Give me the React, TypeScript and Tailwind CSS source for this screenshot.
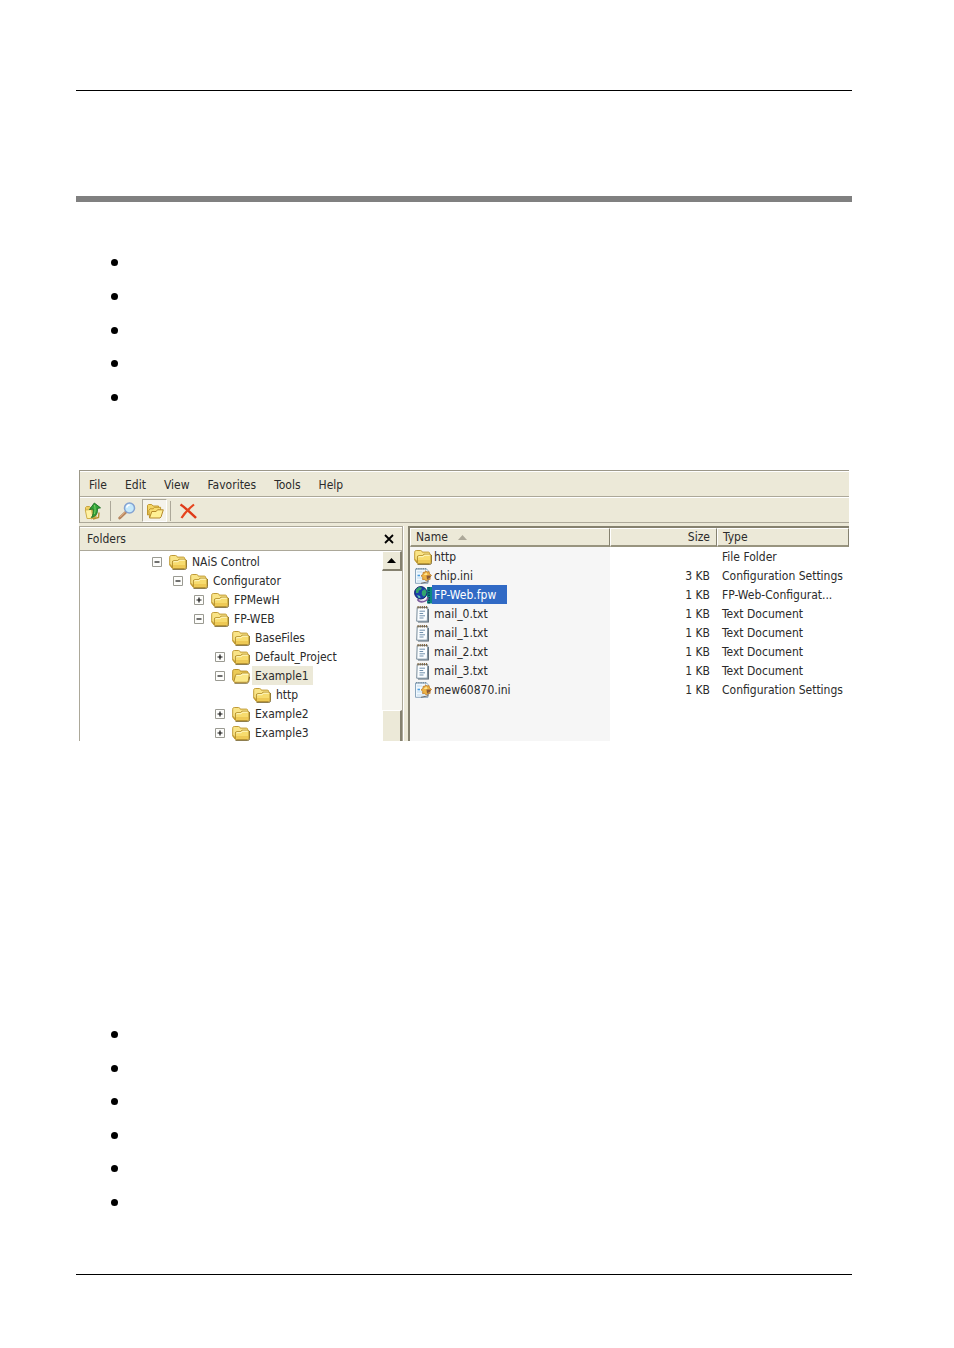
import React from "react";

type TreeNode = {
    name: string;
    indent: string;
    state: "open" | "closed" | "leaf";
    selected?: boolean;
};

type FileRow = {
    name: string;
    icon: "folder" | "ini" | "web" | "text";
    size: string;
    type: string;
    selected?: boolean;
};

const menus = ["File", "Edit", "View", "Favorites", "Tools", "Help"];

const tree: TreeNode[] = [
    { name: "NAiS Control", indent: "pl-[72px]", state: "open" },
    { name: "Configurator", indent: "pl-[93px]", state: "open" },
    { name: "FPMewH", indent: "pl-[114px]", state: "closed" },
    { name: "FP-WEB", indent: "pl-[114px]", state: "open" },
    { name: "BaseFiles", indent: "pl-[135px]", state: "leaf" },
    { name: "Default_Project", indent: "pl-[135px]", state: "closed" },
    { name: "Example1", indent: "pl-[135px]", state: "open", selected: true },
    { name: "http", indent: "pl-[156px]", state: "leaf" },
    { name: "Example2", indent: "pl-[135px]", state: "closed" },
    { name: "Example3", indent: "pl-[135px]", state: "closed" },
];

const files: FileRow[] = [
    { name: "http", icon: "folder", size: "", type: "File Folder" },
    { name: "chip.ini", icon: "ini", size: "3 KB", type: "Configuration Settings" },
    { name: "FP-Web.fpw", icon: "web", size: "1 KB", type: "FP-Web-Configurat...", selected: true },
    { name: "mail_0.txt", icon: "text", size: "1 KB", type: "Text Document" },
    { name: "mail_1.txt", icon: "text", size: "1 KB", type: "Text Document" },
    { name: "mail_2.txt", icon: "text", size: "1 KB", type: "Text Document" },
    { name: "mail_3.txt", icon: "text", size: "1 KB", type: "Text Document" },
    { name: "mew60870.ini", icon: "ini", size: "1 KB", type: "Configuration Settings" },
];

const FolderIcon: React.FC = () => (
    <svg className="h-[18px] w-[18px] shrink-0" viewBox="0 0 18 18" aria-hidden="true">
        <path d="M3.5 16.3h12.3c1.2 0 1.8-.7 1.8-1.8V7" fill="none" stroke="#6e5d28" />
        <path d="M.7 12V4.2c0-1.1.6-1.7 1.6-1.7h4.2c1 0 1.3.5 1.7 1.6h6c1 0 1.5.5 1.5 1.4V12l-12 3.5z" fill="#f9e487" stroke="#c09a35" />
        <path d="M1.2 11.5 3.4 15" stroke="#c39b31" strokeWidth="1.4" />
        <path d="M3.4 8.9c0-.8.4-1.2 1.2-1.2h4l1.3-1.5h5.8c.9 0 1.3.5 1.3 1.3v6.7c0 .9-.5 1.4-1.3 1.4H4.6c-.8 0-1.2-.5-1.2-1.4z" fill="#f7dc6e" stroke="#b38e2b" />
        <path d="M4.4 9.3c0-.4.2-.6.5-.6h4.3l1.2-1.5h5.3" fill="none" stroke="#fff9c8" />
        <path d="M4 12h12.5v2.9H4z" fill="#e7bd45" opacity=".6" />
    </svg>
);

const OpenFolderIcon: React.FC = () => (
    <svg className="h-[18px] w-[18px] shrink-0" viewBox="0 0 18 18" aria-hidden="true">
        <path d="M2.5 16.2h12.3c1 0 1.5-.6 1.9-1.7l1-5" fill="none" stroke="#6e5d28" />
        <path d="M.7 13V4.2c0-1.1.6-1.7 1.6-1.7h4.2c1 0 1.3.5 1.7 1.6h6.2c1 0 1.5.5 1.5 1.4V12l-13 3.3z" fill="#eccb57" stroke="#b8902a" />
        <path d="M3.4 8.5c.2-.8.5-1.2 1.3-1.2h4l1.2-1.2h6.3c.9 0 1.2.5 1.1 1.3l-1 6.5c-.2.9-.5 1.4-1.4 1.4H2.8c-.8 0-1-.5-.8-1.3z" fill="#fbe889" stroke="#b08a2b" />
        <path d="m4.6 8.4 4.6-.1 1.2-1.1h5.7" fill="none" stroke="#fffbd0" />
    </svg>
);

const IniIcon: React.FC = () => (
    <svg className="h-[18px] w-[18px] shrink-0" viewBox="0 0 18 18" aria-hidden="true">
        <path d="M1.5 2h11l1.5 1.5V16.3H1.5z" fill="#f0f8fe" stroke="#8ba6bd" />
        <path d="M2 1.8h11" stroke="#556f83" strokeDasharray="1.4 .8" />
        <path d="M3 5h5M3 11h5M3 14h8" stroke="#c1d9eb" />
        <path d="M3.5 8.5h2.5" stroke="#4b9de0" strokeWidth="1.6" />
        <path d="m7 16.3 7-1.5V12" fill="none" stroke="#6d6d6d" />
        <path d="m11.5 3.8 1.6 1.3 2-.5.4 2.2 2 1.6-1.6 1.8.3 2.1-2.3.2-1.6 1.6-1.6-1.7-2.2.1.3-2.1L7 8.7l2-1.3.1-2.1 1.9.1z" fill="#eeb344" stroke="#b9792a" strokeWidth=".8" />
        <path d="m9.5 8 3-2.5 1 2.5z" fill="#ffe490" />
        <path d="M12.5 8.5h4v2l-3.5 2z" fill="#8a5a39" />
    </svg>
);

const WebIcon: React.FC = () => (
    <svg className="h-[18px] w-[18px] shrink-0" viewBox="0 0 18 18" aria-hidden="true">
        <path d="M13 1h5v16.5h-5z" fill="#0b8a7f" />
        <path d="M15 1v16.5" stroke="#04324c" strokeWidth="1.4" strokeDasharray="1.5 1" />
        <path d="M3.5 13.2c2 3.6 6.500 3 9.500.6l1-2.6" fill="none" stroke="#7b5a9c" strokeWidth="1.8" />
        <path d="M5 13.500c2 1.800 5 1.500 7.500-.5" fill="none" stroke="#e4dcee" />
        <circle cx="6.800" cy="6.800" r="6.200" fill="#1a3fa8" stroke="#10246d" />
        <path d="M2 3.500 5 1l3 .8-1 2-2 .7-.7 2.500L2 7zM8 5l3-2 1.700 3-1.500 4-2 .4-1.500-2.500z" fill="#33a56d" />
        <path d="m3 9 3 1 .5 2-2-.2z" fill="#65c5b1" />
    </svg>
);

const TextIcon: React.FC = () => (
    <svg className="h-[18px] w-[18px] shrink-0" viewBox="0 0 18 18" aria-hidden="true">
        <path d="M4 16.900h10.300V4" fill="none" stroke="#55636f" strokeWidth="1.200" />
        <path d="M3.200 2.500h10.600L13.300 16.200H2.700z" fill="#fafdff" stroke="#788c9b" />
        <path d="M3.500 2.200h10.500" stroke="#806743" strokeWidth="2.400" strokeDasharray="1.200 .9" />
        <path d="M5.500 6.200H11M5.500 8.500h3.700M5.500 10.800H11M5.500 13h4" stroke="#708fab" />
    </svg>
);

const FileIcon: React.FC<{ icon: FileRow["icon"] }> = ({ icon }) => {
    if (icon === "folder") return <FolderIcon />;
    if (icon === "ini") return <IniIcon />;
    if (icon === "web") return <WebIcon />;
    return <TextIcon />;
};

// Small plus / minus box in front of a folder
const Expander: React.FC<{ state: TreeNode["state"] }> = ({ state }) => (
    <svg className="h-[10px] w-[10px] shrink-0" viewBox="0 0 10 10" aria-hidden="true">
        <path d="M.5.5h9v9h-9z" fill="#fdfdfb" stroke="#9a9a92" />
        <path d={state === "closed" ? "M2.500 5h5M5 2.500v5" : "M2.500 5h5"} stroke="#111" strokeWidth="1.200" />
    </svg>
);

const BulletList: React.FC<{ count: number; className: string }> = ({ count, className }) => (
    <ul className={`flex flex-col justify-between pl-[35px] ${className}`}>
        {Array.from({ length: count }, (_, ind) => (
            <li key={ind} className="h-[7px] w-[7px] rounded-full bg-black" />
        ))}
    </ul>
);

const Toolbar: React.FC = () => (
    <div className="flex h-[26px] items-center border-t border-b border-t-white border-b-[#aca899] pt-[1px] pl-[2px]">
        <button aria-label="Up" className="flex h-[22px] w-[22px] items-center justify-center">
            <svg className="h-[18px] w-[18px]" viewBox="0 0 18 18">
                <path d="M1.500 8V5.500l1-1h3L7 6h5v9l-5 2z" fill="#f0d062" stroke="#c8a540" />
                <path d="m1.300 8 6.200-.5 1.500 9L3 16.500z" fill="#fff2a4" stroke="#cfae4a" />
                <path d="m9 17 5.500-1.500.5-5" fill="none" stroke="#b8912e" strokeWidth="1.400" />
                <path d="M7.300 15.500c2-2 2.200-5.500 1.600-8.500l-3.400.500L10.300 1l6.200 4.800-3.200.7c.8 4.500-1.300 8.200-6 9z" fill="#32a33a" stroke="#176c20" strokeWidth=".9" />
                <path d="M10.500 3c.8 3 .8 6.500-.2 9" fill="none" stroke="#7ed566" />
            </svg>
        </button>
        <span className="ml-[6px] h-[20px] w-px bg-[#aca899]" />
        <button aria-label="Search" className="ml-[5px] flex h-[22px] w-[22px] items-center justify-center">
            <svg className="h-[18px] w-[18px]" viewBox="0 0 18 18">
                <path d="m8 10-6.300 6" stroke="#b5835c" strokeWidth="2.800" strokeLinecap="round" />
                <path d="m7 10.200-5 5" stroke="#e2b48a" />
                <circle cx="11.500" cy="6" r="5" fill="#c5e9fb" stroke="#84a3d2" strokeWidth="1.500" />
                <path d="M8.700 5.700c.2-1.700 1.300-2.600 3-2.700" fill="none" stroke="white" strokeWidth="1.500" />
            </svg>
        </button>
        <button
            aria-label="Folders"
            className="ml-[4px] flex h-[23px] w-[25px] items-center justify-center border border-[#aca899] border-r-white border-b-white bg-[#f5f3eb]"
        >
            <svg className="h-[18px] w-[18px]" viewBox="0 0 18 18">
                <path d="M1.500 13V3.300l1-.8h3.200l1.300 1.500h5.500V9z" fill="#f4d566" stroke="#c2992f" />
                <path d="M3.500 15.500 2.800 8.500 4 6.800h3.200l1.200-1.500h6.200V8z" fill="#f8dc6f" stroke="#c2992f" />
                <path d="M3.500 16 5.800 9.500h4.300l1.400-1.700h5.800l-2.200 7-1.100 1.200z" fill="#fff094" stroke="#b5892a" />
            </svg>
        </button>
        <span className="ml-[3px] h-[20px] w-px bg-[#aca899]" />
        <button aria-label="Delete" className="ml-[6px] flex h-[22px] w-[22px] items-center justify-center">
            <svg className="h-[18px] w-[18px]" viewBox="0 0 18 18">
                <path d="M1.500 2.500c5 3.300 10 8.200 15.500 13.500" fill="none" stroke="#df3a19" strokeWidth="2.400" />
                <path d="M15 2.500C9.500 7 5.500 11 2.500 16" fill="none" stroke="#e6451f" strokeWidth="2.200" />
            </svg>
        </button>
    </div>
);

const FolderTree: React.FC = () => (
    <div className="flex w-[324px] shrink-0 flex-col border-t border-r border-l border-[#aca899]">
        <div className="flex h-[24px] items-center justify-between border-t border-b border-t-white border-b-[#aca899] pr-[7px] pl-[7px]">
            <span>Folders</span>
            <button aria-label="Close" className="flex h-[12px] w-[12px] items-center justify-center">
                <svg className="h-[10px] w-[10px]" viewBox="0 0 10 10">
                    <path d="m1 1 8 8M9 1 1 9" stroke="black" strokeWidth="1.800" />
                </svg>
            </button>
        </div>
        <div className="flex h-[190px] bg-white">
            <ul className="grow overflow-hidden pt-[1px]">
                {tree.map((node, ind) => (
                    <li key={ind} className={`flex h-[19px] items-center ${node.indent}`}>
                        {node.state !== "leaf" && (
                            <button aria-label={`Toggle ${node.name}`} className="mr-[7px]">
                                <Expander state={node.state} />
                            </button>
                        )}
                        {node.state === "leaf" && <span className="w-[17px] shrink-0" />}
                        {node.selected ? <OpenFolderIcon /> : <FolderIcon />}
                        <span
                            className={`ml-[2px] h-[19px] pr-[4px] pl-[3px] leading-[20px] whitespace-nowrap ${
                                node.selected ? "bg-[#ece9d8]" : ""
                            }`}
                        >
                            {node.name}
                        </span>
                    </li>
                ))}
            </ul>
            {/* Scroll bar */}
            <div className="flex w-[20px] shrink-0 flex-col justify-between bg-[#f5f4ee]">
                <button
                    aria-label="Scroll up"
                    className="flex h-[20px] items-center justify-center border-t border-r-2 border-b-2 border-l border-t-white border-r-[#85816f] border-b-[#85816f] border-l-white bg-[#ece9d8]"
                >
                    <svg className="h-[5px] w-[9px]" viewBox="0 0 9 5">
                        <path d="M0 5 4.500 0 9 5z" />
                    </svg>
                </button>
                <div className="h-[31px] border-t border-r-2 border-l border-t-white border-r-[#85816f] border-l-white bg-[#ece9d8]" />
            </div>
        </div>
    </div>
);

const headCell =
    "h-[19px] border-t border-l border-r border-b-2 border-t-white border-l-white border-r-[#85816f] border-b-[#98947f] bg-[#ece9d8] p-0 font-normal";

const FileTable: React.FC = () => (
    <div className="min-w-0 grow border-t-2 border-l-2 border-[#85816f] bg-white">
        <table className="w-full table-fixed border-separate border-spacing-0">
            <colgroup>
                <col className="w-[200px]" />
                <col className="w-[107px]" />
                <col />
            </colgroup>
            <thead>
                <tr>
                    <th className={`${headCell} pl-[5px] text-left`}>
                        <span className="flex h-[16px] items-center gap-[10px]">
                            Name
                            <svg className="h-[5px] w-[9px]" viewBox="0 0 9 5" aria-hidden="true">
                                <path d="M0 5 4.500 0 9 5z" fill="#aca899" />
                            </svg>
                        </span>
                    </th>
                    <th className={`${headCell} pr-[6px] text-right`}>Size</th>
                    <th className={`${headCell} pl-[5px] text-left`}>Type</th>
                </tr>
            </thead>
            <tbody>
                {files.map((file) => (
                    <tr key={file.name}>
                        <td className="h-[19px] bg-[#f6f6f6] p-0">
                            <div className="flex h-[19px] items-center pl-[4px]">
                                <FileIcon icon={file.icon} />
                                <span
                                    className={`h-[19px] pl-[2px] leading-[20px] ${
                                        file.selected ? "bg-[#316ac5] pr-[11px] text-white" : ""
                                    }`}
                                >
                                    {file.name}
                                </span>
                            </div>
                        </td>
                        <td className="h-[19px] p-0 pr-[7px] text-right">{file.size}</td>
                        <td className="h-[19px] p-0 pl-[5px] whitespace-nowrap">{file.type}</td>
                    </tr>
                ))}
                {/* Empty space under the last file */}
                <tr aria-hidden="true">
                    <td className="h-[42px] bg-[#f6f6f6] p-0" />
                    <td />
                    <td />
                </tr>
            </tbody>
        </table>
    </div>
);

const App: React.FC = () => {
    return (
        <main className="min-h-screen bg-white pt-[90px] pr-[102px] pb-[73px] pl-[76px]">
            <hr className="border-t border-black" />
            <div className="mt-[105px] h-[6px] bg-[#808080]" />
            <BulletList count={5} className="mt-[57px] h-[142px]" />

            {/* Explorer window */}
            <section className="mx-[3px] mt-[69px] bg-[#ece9d8] font-['DejaVu_Sans_Condensed','DejaVu_Sans',sans-serif] text-[12px] leading-[16px] text-[#2b2b2b]">
                <div className="border-t border-l border-[#9c9889]">
                    <nav className="flex h-[26px] items-center gap-[18px] border-t border-b border-t-white border-b-[#aca899] pt-[1px] pl-[9px]">
                        {menus.map((menu) => (
                            <button key={menu}>{menu}</button>
                        ))}
                    </nav>
                    <Toolbar />
                </div>
                <div className="flex bg-[#ece9d8] pt-[3px]">
                    <FolderTree />
                    <div className="w-[5px] shrink-0 border-l border-white" />
                    <FileTable />
                </div>
            </section>

            <BulletList count={6} className="mt-[290px] h-[175px]" />
            <hr className="mt-[68px] border-t border-black" />
        </main>
    );
};

export default App;
